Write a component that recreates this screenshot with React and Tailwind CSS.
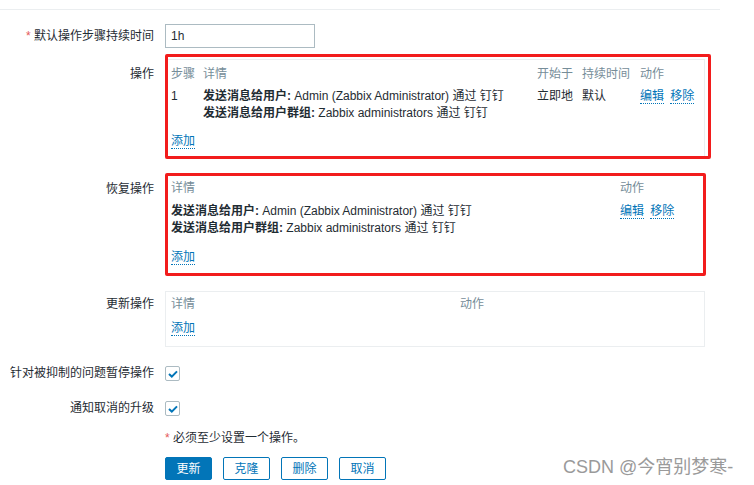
import React from 'react';

const font = { fontFamily: '"Liberation Sans", Arial, "Noto Sans CJK SC", sans-serif' };

const Link = ({ children, className = '' }) => (
  <span className={`text-[#0275b8] border-b border-dotted border-[#0275b8] leading-[14px] ${className}`}>{children}</span>
);

const Label = ({ children, className = '' }) => (
  <div className={`w-[165px] shrink-0 pr-[11px] text-right text-[#1f2c33] ${className}`}>{children}</div>
);

const Detail = () => (
  <div className="leading-[17px]">
    <div>
      <b>发送消息给用户:</b> Admin (Zabbix Administrator) 通过 钉钉
    </div>
    <div>
      <b>发送消息给用户群组:</b> Zabbix administrators 通过 钉钉
    </div>
  </div>
);

const Checkbox = () => (
  <div className="w-[15px] h-[15px] border border-[#acbbc2] rounded-[2px] bg-white flex items-center justify-center">
    <svg width="10" height="8" viewBox="0 0 10 8">
      <path d="M1 4 L3.8 6.6 L9 1.4" fill="none" stroke="#0275b8" strokeWidth="2" />
    </svg>
  </div>
);

export default function App() {
  return (
    <div className="relative w-[754px] h-[485px] bg-white text-[12px] text-[#1f2c33] overflow-hidden" style={font}>
      <div className="w-[720px] h-[10px] border-b border-[#ebeef0]" />

      {/* default step duration */}
      <div className="flex items-center mt-[14px]">
        <Label>
          <span className="text-[#e45959]">* </span>默认操作步骤持续时间
        </Label>
        <div className="w-[150px] h-[24px] border border-[#acbbc2] px-[5px] flex items-center">1h</div>
      </div>

      {/* operations */}
      <div className="flex mt-[11px]">
        <Label className="pt-[6px]">操作</Label>
        <div className="relative w-[540px] h-[100px] border border-[#ebeef0] px-[5px] pt-[5px]">
          <table className="border-collapse">
            <thead>
              <tr className="text-[#768d99] text-left">
                <th className="font-normal w-[32px] p-0 h-[17px] leading-[17px]">步骤</th>
                <th className="font-normal w-[334px] p-0">详情</th>
                <th className="font-normal w-[45px] p-0">开始于</th>
                <th className="font-normal w-[58px] p-0">持续时间</th>
                <th className="font-normal p-0">动作</th>
              </tr>
            </thead>
            <tbody>
              <tr className="align-top">
                <td className="p-0 pt-[5px] leading-[17px]">1</td>
                <td className="p-0 pt-[5px]"><Detail /></td>
                <td className="p-0 pt-[5px] leading-[17px]">立即地</td>
                <td className="p-0 pt-[5px] leading-[17px]">默认</td>
                <td className="p-0 pt-[5px] leading-[17px] whitespace-nowrap">
                  <Link>编辑</Link> <Link className="ml-[3px]">移除</Link>
                </td>
              </tr>
            </tbody>
          </table>
          <div className="mt-[10px]"><Link>添加</Link></div>
          <div className="absolute left-[-1px] top-[-6px] w-[546px] h-[105px] border-[3px] border-[#f21c1c] rounded-[2px]" />
        </div>
      </div>

      {/* recovery operations */}
      <div className="flex mt-[16px]">
        <Label className="pt-[5px]">恢复操作</Label>
        <div className="relative w-[540px] h-[100px] border border-[#ebeef0] px-[5px] pt-[4px]">
          <div className="flex text-[#768d99] leading-[17px]">
            <div className="w-[449px]">详情</div>
            <div>动作</div>
          </div>
          <div className="flex mt-[6px]">
            <div className="w-[449px]"><Detail /></div>
            <div className="leading-[17px] whitespace-nowrap">
              <Link>编辑</Link> <Link className="ml-[3px]">移除</Link>
            </div>
          </div>
          <div className="mt-[11px]"><Link>添加</Link></div>
          <div className="absolute left-[-1px] top-[-3px] w-[541px] h-[103px] border-[3px] border-[#f21c1c] rounded-[2px]" />
        </div>
      </div>

      {/* update operations */}
      <div className="flex mt-[16px]">
        <Label className="pt-[4px]">更新操作</Label>
        <div className="w-[540px] h-[56px] border border-[#ebeef0] px-[5px] pt-[4px]">
          <div className="flex text-[#768d99] leading-[17px]">
            <div className="w-[289px]">详情</div>
            <div>动作</div>
          </div>
          <div className="mt-[6px]"><Link>添加</Link></div>
        </div>
      </div>

      <div className="flex items-center h-[15px] leading-[15px] mt-[19px]">
        <Label>针对被抑制的问题暂停操作</Label>
        <Checkbox />
      </div>

      <div className="flex items-center h-[15px] leading-[15px] mt-[20px]">
        <Label>通知取消的升级</Label>
        <Checkbox />
      </div>

      <div className="flex mt-[13px] leading-[18px]">
        <Label />
        <div><span className="text-[#e45959]">*</span> 必须至少设置一个操作。</div>
      </div>

      <div className="flex mt-[10px]">
        <Label />
        <div className="flex gap-[11px]">
          <button className="w-[47px] h-[23px] rounded-[2px] bg-[#0275b8] text-white border border-[#0275b8]">更新</button>
          <button className="w-[47px] h-[23px] rounded-[2px] bg-white text-[#0275b8] border border-[#0275b8]">克隆</button>
          <button className="w-[47px] h-[23px] rounded-[2px] bg-white text-[#0275b8] border border-[#0275b8]">删除</button>
          <button className="w-[47px] h-[23px] rounded-[2px] bg-white text-[#0275b8] border border-[#0275b8]">取消</button>
        </div>
      </div>

      <div className="absolute left-[563px] top-[455px] text-[18px] text-[#9a9a9a] leading-[24px]">CSDN @今宵别梦寒-</div>
    </div>
  );
}
